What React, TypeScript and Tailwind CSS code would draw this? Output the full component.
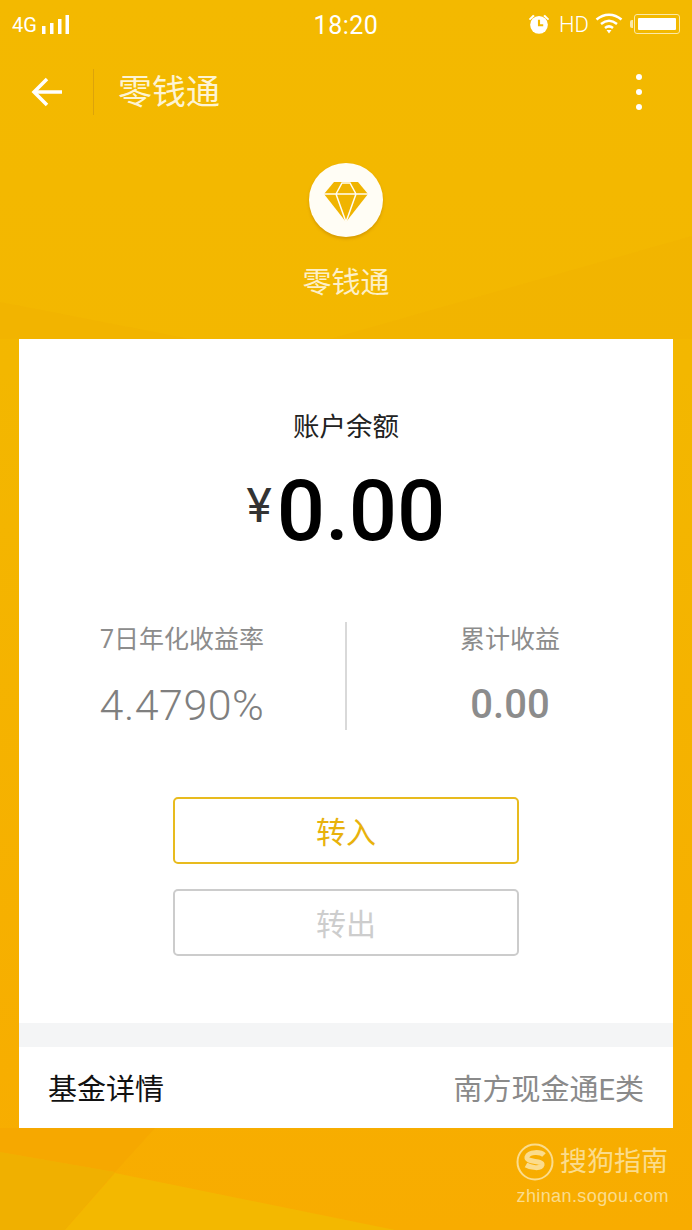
import React from "react";

const cjk = "font-['Roboto','Noto_Sans_CJK_SC',sans-serif]";

function Background() {
  return (
    <svg className="absolute inset-0" width="692" height="1230" viewBox="0 0 692 1230">
      <defs>
        <linearGradient id="bg" x1="0" y1="0" x2="0" y2="1">
          <stop offset="0" stopColor="#f3b900" />
          <stop offset="0.3" stopColor="#f3b700" />
          <stop offset="1" stopColor="#f8ac00" />
        </linearGradient>
      </defs>
      <rect width="692" height="1230" fill="url(#bg)" />
      <polygon points="0,302 190,339 0,339" fill="#f0a800" opacity="0.18" />
      <polygon points="692,236 330,339 692,339" fill="#f0a800" opacity="0.2" />
      <polygon points="0,1128 155,1128 115,1172 0,1152" fill="#f6a800" />
      <polygon points="0,1152 115,1172 65,1230 0,1230" fill="#f0b000" />
      <polygon points="115,1173 395,1230 65,1230" fill="#f3b800" />
    </svg>
  );
}

function StatusBar() {
  return (
    <div className="relative flex h-[50px] items-center justify-between pl-[12px] pr-[12px] text-white">
      <div className="flex w-[200px] items-center gap-[5px]">
        <span className="font-['Roboto',sans-serif] text-[20px] leading-none">4G</span>
        <svg width="28" height="20" viewBox="0 0 28 20" fill="#fff">
          <rect x="0" y="11" width="3.500" height="8" />
          <rect x="8" y="8" width="3.500" height="11" />
          <rect x="16" y="4" width="3.500" height="15" />
          <rect x="23.500" y="0" width="3.500" height="19" />
        </svg>
      </div>
      <span className="font-['Roboto',sans-serif] text-[25px] leading-none tracking-[0.5px]">18:20</span>
      <div className="flex w-[200px] items-center justify-end">
        <svg width="22" height="22" viewBox="0 0 26 26" className="mb-[3px] mr-[9px]">
          <circle cx="13" cy="14" r="10.500" fill="#fff" />
          <path d="M13 8v6.500h5" stroke="#f3b900" strokeWidth="2.500" fill="none" />
          <path d="M1 7l5-5 2 1.500-5.500 5zM25 7l-5-5-2 1.500 5.500 5z" fill="#fff" />
        </svg>
        <span className="font-['Roboto',sans-serif] text-[22px] font-light leading-none">HD</span>
        <svg width="28" height="22" viewBox="0 0 28 22" className="mb-[5px] ml-[6px] mr-[11px]" fill="none" stroke="#fff" strokeWidth="2.500">
          <path d="M1.500 7.500C9 1 19 1 26.500 7.500" />
          <path d="M6 12C11 8 17 8 22 12" />
          <path d="M10 16c2.500-2 5.500-2 8 0" />
          <path d="M11.500 18h5L14 21.500z" fill="#fff" stroke="none" />
        </svg>
        <div className="relative mb-[2px] h-[20px] w-[46px] rounded-[3px] border border-[#fbe9a8] p-[3px]">
          <div className="h-full w-full rounded-[1px] bg-white" />
          <div className="absolute left-[-5px] top-[5px] h-[8px] w-[3px] rounded-l-[2px] bg-[#fbe9a8]" />
        </div>
      </div>
    </div>
  );
}

function Header() {
  return (
    <div className="relative flex h-[84px] items-center">
      <div className="flex w-[93px] justify-center">
        <svg width="31" height="30" viewBox="0 0 31 30" fill="none" stroke="#fff" strokeWidth="3.500">
          <path d="M31 15H3" />
          <path d="M16 2L3 15l13 13" />
        </svg>
      </div>
      <div className="h-[46px] w-px bg-[#dca30a]" />
      <span className={`${cjk} ml-[24px] text-[34px] leading-none text-[#fdf4d4]`}>零钱通</span>
      <div className="ml-auto mr-[50px] flex flex-col gap-[9px]">
        <div className="h-[6px] w-[6px] rounded-full bg-white" />
        <div className="h-[6px] w-[6px] rounded-full bg-white" />
        <div className="h-[6px] w-[6px] rounded-full bg-white" />
      </div>
    </div>
  );
}

function Hero() {
  return (
    <div className="relative flex h-[205px] flex-col items-center pt-[29px]">
      <div className="flex h-[74px] w-[74px] items-center justify-center rounded-full bg-[#fffdf5] shadow-[0_2px_3px_rgba(180,120,0,0.45)]">
        <svg width="44" height="40" viewBox="0 0 44 40" className="mt-[3px]">
          <polygon points="10,0 34,0 44,12 22,40 0,12" fill="#f0b400" />
          <path d="M0 12H44M12 12L18 1H26L32 12M12 12L22 40L32 12" fill="none" stroke="#fffdf5" strokeWidth="1.500" />
        </svg>
      </div>
      <span className={`${cjk} mt-[32px] text-[29px] leading-none text-[#fdf0c8]`}>零钱通</span>
    </div>
  );
}

function Card() {
  return (
    <div className="relative mx-[19px] h-[789px] w-[654px] bg-white">
      <div className="flex h-[684px] flex-col items-center pt-[73px]">
        <span className={`${cjk} text-[26.500px] leading-[30px] text-[#222]`}>账户余额</span>
        <div className="mt-[18px] flex h-[100px] items-center">
          <span className="mb-[8px] mr-[5px] font-['Roboto',sans-serif] text-[48px] font-normal leading-none text-[#333]">¥</span>
          <span className="mt-[2px] font-['Roboto',sans-serif] text-[85px] font-medium leading-none tracking-[0px] text-black">0.00</span>
        </div>
        <div className="mt-[62px] flex h-[108px] w-full items-stretch">
          <div className="flex flex-1 flex-col items-center pt-[3px]">
            <span className={`${cjk} text-[25px] leading-[30px] text-[#8c8c8c]`}>7日年化收益率</span>
            <span className="mt-[25px] font-['Roboto',sans-serif] text-[43px] font-light leading-[50px] tracking-[0.5px] text-[#7f7f7f]">4.4790%</span>
          </div>
          <div className="w-[2px] bg-[#d9d9d9]" />
          <div className="flex flex-1 flex-col items-center pt-[3px]">
            <span className={`${cjk} text-[25px] leading-[30px] text-[#8c8c8c]`}>累计收益</span>
            <span className="mt-[25px] font-['Roboto',sans-serif] text-[40px] font-medium leading-[50px] text-[#8c8c8c]">0.00</span>
          </div>
        </div>
        <div className={`${cjk} mt-[67px] flex h-[67px] w-[346px] items-center justify-center rounded-[5px] border-2 border-[#e8bb1e] pt-[4px] text-[30px] text-[#e8b20c]`}>转入</div>
        <div className={`${cjk} mt-[25px] flex h-[67px] w-[346px] items-center justify-center rounded-[5px] border-2 border-[#cccccc] pt-[4px] text-[30px] text-[#cdcdcd]`}>转出</div>
      </div>
      <div className="h-[24px] bg-[#f4f5f6]" />
      <div className={`${cjk} flex h-[81px] items-center justify-between px-[29px] pt-[6px]`}>
        <span className="text-[29px] leading-none text-[#111]">基金详情</span>
        <span className="text-[29px] leading-none text-[#8a8a8a]">南方现金通E类</span>
      </div>
    </div>
  );
}

function Watermark() {
  return (
    <div className="absolute right-[24px] top-[1142px] flex flex-col items-end text-[#fbdc8c]">
      <div className="flex items-center">
        <svg width="40" height="40" viewBox="0 0 40 40" className="mr-[5px]">
          <circle cx="20" cy="20" r="17.500" fill="none" stroke="#fbdc8c" strokeWidth="2" />
          <path d="M29 13c-3-3-15-4-17 2-1 6 16 3 15 8-1 4-11 3-16 0" fill="none" stroke="#fbdc8c" strokeWidth="5" />
        </svg>
        <span className={`${cjk} text-[27px] leading-none`}>搜狗指南</span>
      </div>
      <span className="mr-[-1px] mt-[3px] font-['Liberation_Sans',sans-serif] text-[18px] leading-[22px] tracking-[0.4px]">zhinan.sogou.com</span>
    </div>
  );
}

export default function App() {
  return (
    <div className="relative h-[1230px] w-[692px] overflow-hidden">
      <Background />
      <StatusBar />
      <Header />
      <Hero />
      <Card />
      <Watermark />
    </div>
  );
}
